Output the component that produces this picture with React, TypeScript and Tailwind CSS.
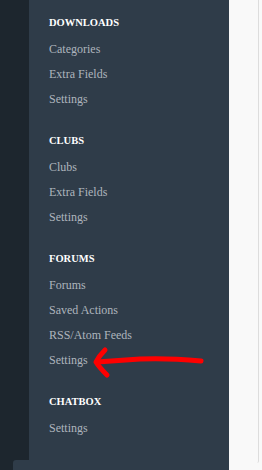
import React from "react";

const sections = [
    { title: "DOWNLOADS", items: ["Categories", "Extra Fields", "Settings"] },
    { title: "CLUBS", items: ["Clubs", "Extra Fields", "Settings"] },
    { title: "FORUMS", items: ["Forums", "Saved Actions", "RSS/Atom Feeds", "Settings"] },
    { title: "CHATBOX", items: ["Settings"] },
];

const Arrow = () => (
    <svg
        className="absolute left-0 top-0 pointer-events-none"
        width="262"
        height="470"
        viewBox="0 0 262 470"
    >
        <g fill="none" stroke="#ff0000" strokeWidth="5" strokeLinecap="round" strokeLinejoin="round">
            <path d="M201 361 C180 359 160 358 140 359 C125 360 110 361 97 362" />
            <path d="M105 350 C101 354 98 358 96 362 C99 367 103 371 107 375" />
        </g>
    </svg>
);

const App = () => {
    return (
        <div className="relative flex w-[262px] h-[470px] overflow-hidden bg-[#1d262e] font-['Liberation_Serif','Times_New_Roman',serif]">
            <div className="flex flex-col w-[229px] h-full">
                <div className="flex h-[460px]">
                    <div className="w-[29px] h-full bg-[#1d262e]" />
                    <div className="w-[200px] h-full bg-[#2f3c49] pt-[9px] pl-[20px]">
                        {sections.map((s) => (
                            <div key={s.title} className="mb-[15px]">
                                <div className="h-[28px] leading-[28px] text-[10.5px] font-bold text-white font-['Liberation_Serif',serif]">
                                    {s.title}
                                </div>
                                {s.items.map((item, i) => (
                                    <div
                                        key={i}
                                        className="h-[25px] leading-[25px] text-[12px] text-[#aeb5bd] font-['Liberation_Serif',serif]"
                                    >
                                        {item}
                                    </div>
                                ))}
                            </div>
                        ))}
                    </div>
                </div>
                <div className="flex flex-1">
                    <div className="w-[13px] bg-[#1d262e]" />
                    <div className="flex-1 bg-[#2f3c49] rounded-tl-[3px]" />
                </div>
            </div>
            <div className="w-[33px] h-full bg-[#f9f9f9] flex">
                <div className="w-[30px] h-[463px] border-r border-[#dddddd] rounded-br-[2px]" />
            </div>
            <Arrow />
        </div>
    );
};

export default App;
